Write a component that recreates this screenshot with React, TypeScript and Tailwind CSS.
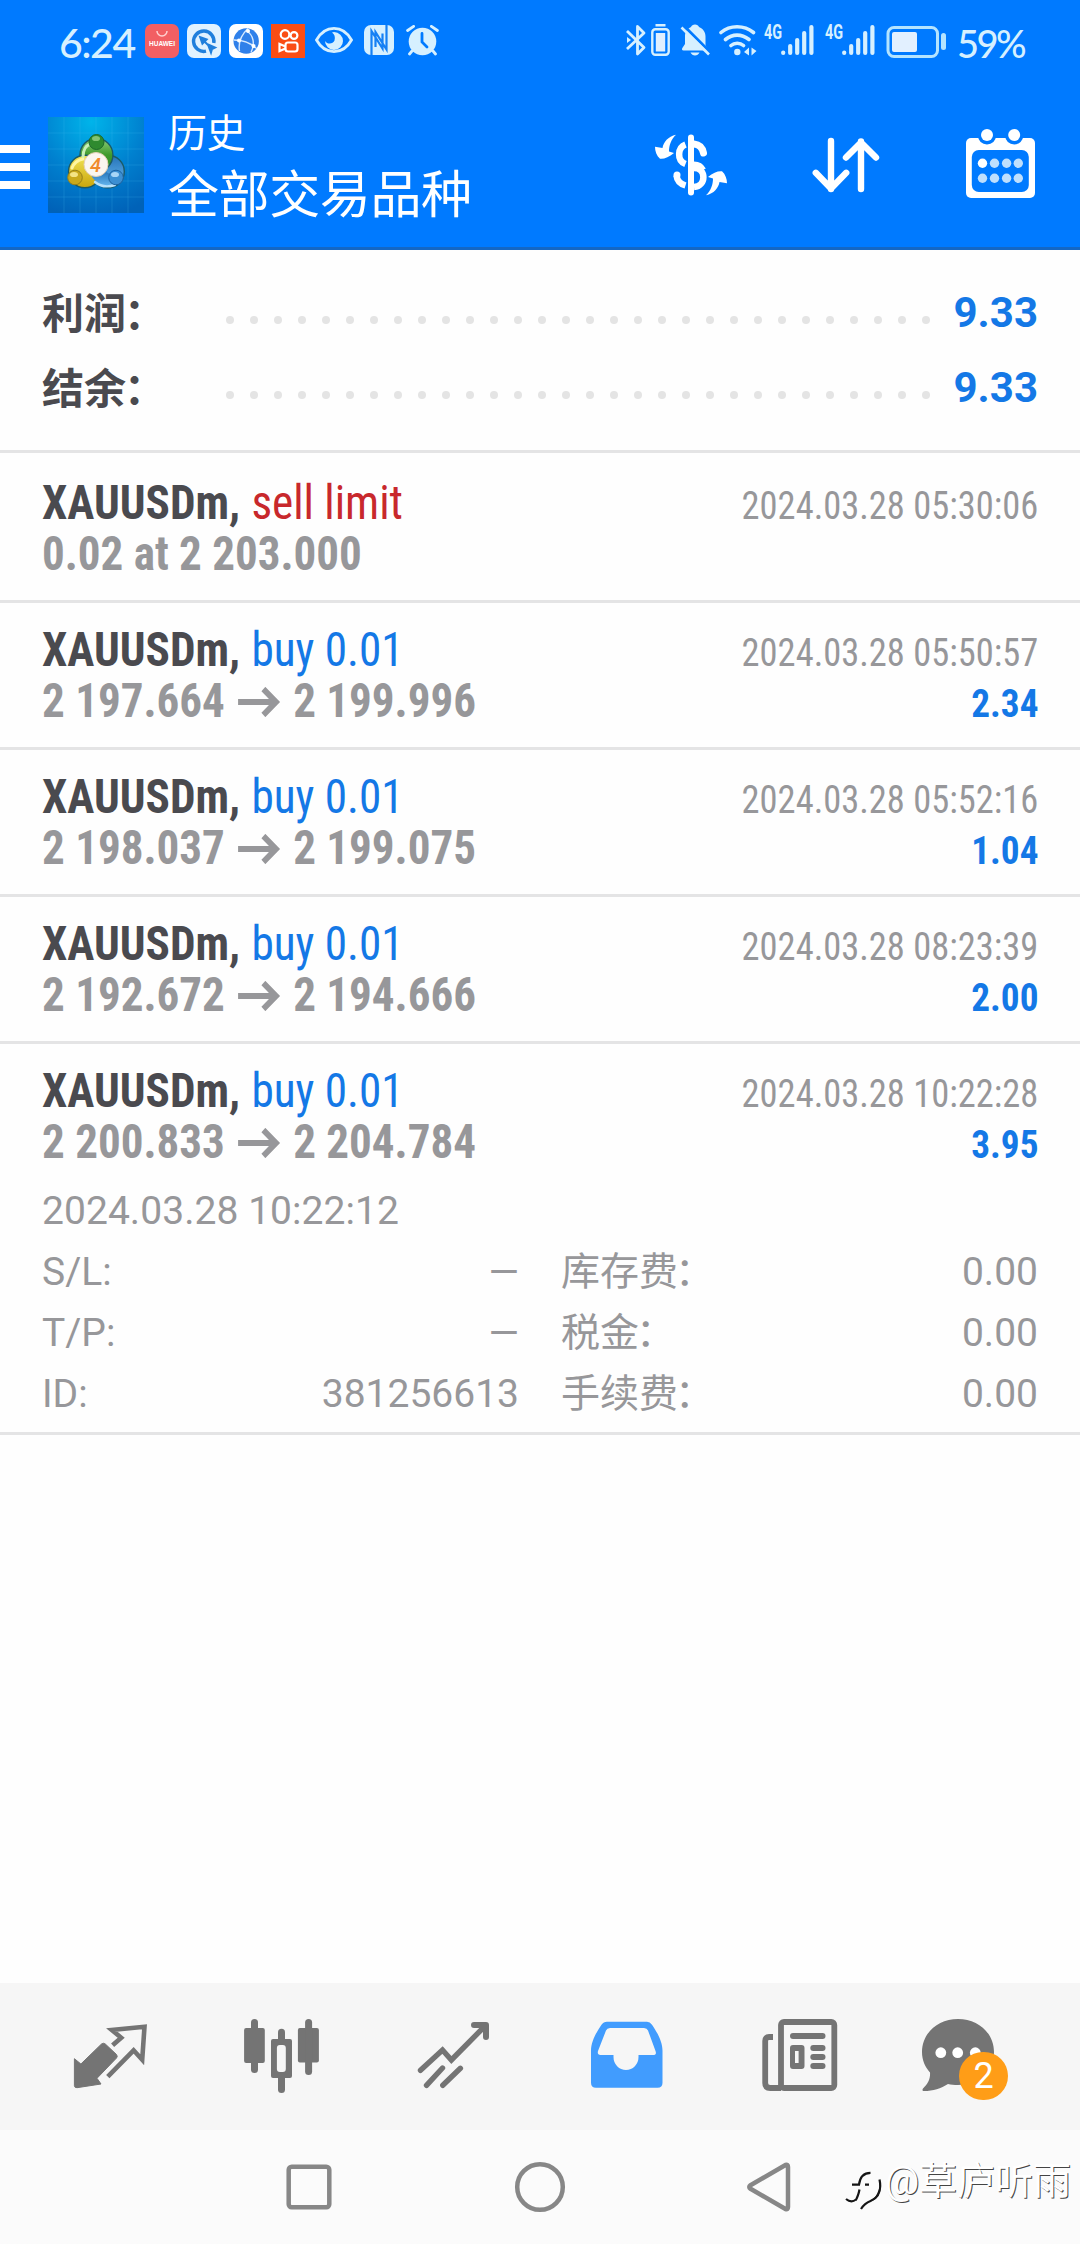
import React from "react";

type Deal = {
  symbol: string;
  side: string;
  sideColor: string;
  from: string;
  to?: string;
  time: string;
  profit?: string;
};

const deals: Deal[] = [
  { symbol: "XAUUSDm,", side: "sell limit", sideColor: "text-[#c8282c]", from: "0.02 at 2 203.000", time: "2024.03.28 05:30:06" },
  { symbol: "XAUUSDm,", side: "buy 0.01", sideColor: "text-[#1478e6]", from: "2 197.664", to: "2 199.996", time: "2024.03.28 05:50:57", profit: "2.34" },
  { symbol: "XAUUSDm,", side: "buy 0.01", sideColor: "text-[#1478e6]", from: "2 198.037", to: "2 199.075", time: "2024.03.28 05:52:16", profit: "1.04" },
  { symbol: "XAUUSDm,", side: "buy 0.01", sideColor: "text-[#1478e6]", from: "2 192.672", to: "2 194.666", time: "2024.03.28 08:23:39", profit: "2.00" },
  { symbol: "XAUUSDm,", side: "buy 0.01", sideColor: "text-[#1478e6]", from: "2 200.833", to: "2 204.784", time: "2024.03.28 10:22:28", profit: "3.95" },
];

const details = [
  ["S/L:", "—", "库存费", "0.00"],
  ["T/P:", "—", "税金", "0.00"],
  ["ID:", "381256613", "手续费", "0.00"],
];

const summary = [
  ["利润", "9.33"],
  ["结余", "9.33"],
];

function SignalBars() {
  return (
    <div className="flex items-start">
      <span className="-mt-[1px] w-[17px] origin-left scale-x-[0.72] font-['Roboto'] text-[20px] leading-[18px] font-bold">4G</span>
      <svg className="h-8 w-[33px]" viewBox="0 0 33 32" fill="none" stroke="currentColor" strokeWidth="4.2" strokeLinecap="round">
        <path d="M2.2 28.6v.4M9.2 22v7M16.2 16v13M23.2 9v20M30.4 3v26" />
      </svg>
    </div>
  );
}

function StatusBar() {
  return (
    <div className="flex h-[82px] items-start justify-between pt-6 pr-[56px] pl-[59px] text-[#d6f0ff]">
      <div className="flex h-[34px] items-start">
        <span className="mt-[2px] mr-[9px] w-[77px] font-['Lato'] text-[41px] leading-[34px] font-medium tracking-[-1.5px]">6:24</span>
        {/* HUAWEI store */}
        <div className="flex h-[34px] w-[34px] flex-col items-center rounded-[7px] bg-[#f25f63]">
          <svg className="mt-1.5 h-2 w-3" viewBox="0 0 12 8" fill="none" stroke="#ffd0cf" strokeWidth="1.5">
            <path d="M1 1a5 5 0 0 0 10 0" />
          </svg>
          <span className="mt-[2px] font-['Liberation_Sans'] text-[6.5px] leading-[8px] font-bold text-white">HUAWEI</span>
        </div>
        <svg className="ml-2 h-[34px] w-[34px]" viewBox="0 0 34 34" fill="none">
          <rect width="34" height="34" rx="7" fill="#e0f2ff" />
          <path d="M19 27.2A10.2 10.2 0 1 1 26.8 19" stroke="#1f7fdc" strokeWidth="3.4" />
          <path d="M11.5 11.5l10 3.5-6.5 6.5z" fill="#1f7fdc" />
          <path d="M16 16l5.5 5.5M21 20.5l7 3-3 1.5-1 3.5z" stroke="#1f7fdc" strokeWidth="2" fill="#1f7fdc" />
        </svg>
        <svg className="ml-2 h-[34px] w-[34px]" viewBox="0 0 34 34" fill="none">
          <rect width="34" height="34" rx="7" fill="#fff" />
          <circle cx="17.2" cy="17" r="12.7" fill="#2f80ea" />
          <path d="M5 16c8 0 17 3 23 9M19 4.500C12 11 9 18 10.500 27M17 6.500C25 11 26 20 22 28.500" stroke="#d5e8ff" strokeWidth="1.400" />
          <circle cx="19" cy="7" r="2" fill="#fff" />
          <circle cx="10" cy="16.500" r="2" fill="#fff" />
          <circle cx="24.500" cy="22" r="2" fill="#fff" />
        </svg>
        <svg className="ml-2 h-[34px] w-[34px]" viewBox="0 0 34 34" fill="none" stroke="#fff" strokeWidth="2.2">
          <rect width="34" height="34" fill="#fa4d14" stroke="none" />
          <circle cx="14" cy="10.500" r="4.300" />
          <circle cx="23" cy="11.500" r="3.400" />
          <rect x="14.500" y="18.500" width="12" height="9" rx="2.500" />
          <path d="M14.500 22.500l-6-2.500v7l6-2.500" />
        </svg>
        <svg className="ml-[10px] h-8 w-[38px]" viewBox="0 0 38 32" fill="none">
          <path d="M1.500 16C10 0.500 28 .500 36.500 16 28 31.500 10 31.500 1.500 16z" stroke="#d6f0ff" strokeWidth="2.800" />
          <path d="M19 8a9 9 0 1 1-9 9c2 3.500 8 3.500 9.500-.500C20.500 13 19.500 10 17 8.500z" fill="#d6f0ff" />
        </svg>
        <svg className="mt-[1px] ml-[11px] h-[30px] w-[30px]" viewBox="0 0 30 30" fill="none">
          <rect width="30" height="30" rx="7" fill="#d6f0ff" />
          <path d="M7.500 30V6l11 17.500V8.500M22.500 0v24.500L11.500 7v15" stroke="#1580f4" strokeWidth="2.200" />
        </svg>
        <svg className="mt-[1px] ml-3 h-[31px] w-[33px]" viewBox="0 0 33 31" fill="none" stroke="#d6f0ff" strokeWidth="2.800" strokeLinecap="round">
          <circle cx="16.500" cy="16.500" r="13.800" fill="#d6f0ff" stroke="none" />
          <path d="M1.600 5.500l6-4.200M31.400 5.500l-6-4.200M6 26l-2.500 3M27 26l2.500 3" />
          <path d="M16 8.500V17l5 5" stroke="#007aff" strokeWidth="2.800" />
        </svg>
      </div>

      <div className="flex items-start">
        <svg className="h-8 w-[21px]" viewBox="0 0 21 32" fill="none" stroke="currentColor" strokeWidth="2.800">
          <path d="M1 7l17 16.500-6.500 6.500V2.500L18 9 1 25" strokeLinejoin="round" />
          <path d="M1 13l4 3-4 3z" fill="currentColor" stroke="none" />
        </svg>
        <svg className="ml-1 h-8 w-[19px]" viewBox="0 0 19 32" fill="none">
          <path d="M4.500 1.200h10" stroke="currentColor" strokeWidth="2.600" />
          <rect x="1.300" y="5.300" width="16.400" height="25.400" rx="3" stroke="currentColor" strokeWidth="2.400" />
          <rect x="4.800" y="9" width="9.400" height="18.500" fill="#e0efff" />
        </svg>
        <svg className="ml-[10px] h-8 w-[31px]" viewBox="0 0 31 32">
          <path d="M15 0.500c2 0 3.500 1 4 2.500 4 1.500 6.500 5 6.500 9.500v9l3 5h-25c-1.500 0-2-1.500-1-2.800L5 20v-8c0-4.500 2.500-7.500 6-9C11.500 1.500 13 .500 15 .500z" fill="currentColor" />
          <path d="M10.500 28.500h9c-1 2-2.500 3-4.500 3s-3.500-1-4.500-3z" fill="currentColor" />
          <path d="M3 1l28 28" stroke="#007aff" strokeWidth="3" />
          <path d="M1.500 3.500l27.500 27" stroke="currentColor" strokeWidth="2.600" />
        </svg>
        <svg className="ml-2 h-8 w-[38px]" viewBox="0 0 38 32" fill="none" stroke="currentColor" strokeWidth="3.600" strokeLinecap="round">
          <path d="M2 8.500C11 .800 25 .800 34.500 8.500M6.500 15.500c7-5.800 16-5.800 23.500 0M12 21.500c3.500-3 9-3 12.500 0" />
          <circle cx="18.300" cy="28" r="3.200" fill="currentColor" stroke="none" />
          <path d="M30 23.500v8l-5-3.500zM32.500 23.500v8l5-4.500z" fill="currentColor" stroke="none" />
        </svg>
        <div className="ml-[7px]"><SignalBars /></div>
        <div className="ml-[11px]"><SignalBars /></div>
        <svg className="mt-[1px] ml-[11px] h-[34px] w-[62px]" viewBox="0 0 62 34" fill="none">
          <rect x="2" y="2.500" width="49.500" height="29" rx="6" stroke="#b4e4ff" strokeWidth="3" />
          <rect x="6" y="7" width="25" height="20" rx="2" fill="#e2f0ff" />
          <rect x="55" y="8" width="5" height="17" rx="2.500" fill="#b4e4ff" />
        </svg>
        <span className="mt-[2px] ml-[9px] w-[67px] font-['Lato'] text-[38px] leading-[34px] font-medium tracking-[-2.5px]">59%</span>
      </div>
    </div>
  );
}

function AppLogo() {
  return (
    <svg className="h-24 w-24" viewBox="0 0 96 96">
      <defs>
        <radialGradient id="sky" cx="0.45" cy="0.05" r="1">
          <stop offset="0" stopColor="#00b4ea" />
          <stop offset="0.55" stopColor="#0080cf" />
          <stop offset="1" stopColor="#0062b8" />
        </radialGradient>
        <linearGradient id="green" x2="0" y2="1">
          <stop offset="0" stopColor="#8fce7a" />
          <stop offset="0.5" stopColor="#3f9a2c" />
          <stop offset="1" stopColor="#2f8a28" />
        </linearGradient>
        <linearGradient id="gold" x2="0" y2="1">
          <stop offset="0" stopColor="#f2e455" />
          <stop offset="1" stopColor="#c9a50c" />
        </linearGradient>
        <linearGradient id="azure" x2="0" y2="1">
          <stop offset="0" stopColor="#2472b8" />
          <stop offset="1" stopColor="#6bbcf2" />
        </linearGradient>
      </defs>
      <rect width="96" height="96" fill="url(#sky)" />
      <path d="M16 0v96M32 0v96M48 0v96M64 0v96M80 0v96M0 16h96M0 32h96M0 48h96M0 64h96M0 80h96" stroke="#4cc0f5" strokeOpacity="0.2" />
      <g stroke="#1b5a66" strokeWidth="1.4">
        <circle cx="60" cy="54.500" r="16.300" fill="url(#azure)" />
        <circle cx="48.400" cy="38" r="16.500" fill="url(#green)" />
        <circle cx="36.800" cy="54.500" r="16.300" fill="url(#gold)" />
      </g>
      {/* the blue figure's arm passes over the gold one */}
      <path d="M43 58c4 8 12 13 22 12l3-10-12-6z" fill="url(#azure)" />
      <path d="M35 40c0-7 3-12 8-13" fill="none" stroke="#c9efb8" strokeWidth="3" strokeLinecap="round" />
      <path d="M47 65c6 5 14 5 20 3" fill="none" stroke="#b7e1fb" strokeWidth="2.400" strokeLinecap="round" />
      <path d="M24 51c2-5 6-8 11-9" fill="none" stroke="#fff6a0" strokeWidth="3" strokeLinecap="round" />
      <circle cx="48.500" cy="25" r="7.500" fill="#2f8a2f" stroke="#1e6a2a" />
      <ellipse cx="48" cy="21.500" rx="4" ry="2.600" fill="#a5dc8f" fillOpacity="0.7" />
      <circle cx="27" cy="60.500" r="7.300" fill="#c9a91c" stroke="#96801a" />
      <ellipse cx="26" cy="57.500" rx="4" ry="2.600" fill="#fff3a0" fillOpacity="0.8" />
      <circle cx="68" cy="60.500" r="7.300" fill="#3c8fd2" stroke="#1e62a0" />
      <ellipse cx="67" cy="57.500" rx="4" ry="2.600" fill="#c4e6ff" fillOpacity="0.8" />
      <circle cx="48" cy="47.500" r="12" fill="#fbf6ef" stroke="#e4cfb4" />
      <text x="47.500" y="54.500" textAnchor="middle" fontFamily="Roboto" fontStyle="italic" fontWeight="500" fontSize="20" fill="#f08a2b">4</text>
    </svg>
  );
}

function Header() {
  return (
    <header className="h-[250px] border-b-[3px] border-[#1467c4] bg-[#007aff]">
      <StatusBar />
      <div className="flex items-start">
        <div className="mt-[63px] flex w-[30px] flex-col gap-[10px]">
          <div className="h-2 bg-white" />
          <div className="h-2 bg-white" />
          <div className="h-2 bg-white" />
        </div>
        <div className="mt-[35px] ml-[18px]">
          <AppLogo />
        </div>
        <div className="mt-[27px] ml-6 flex flex-1 flex-col text-white">
          <span className="text-[39px] leading-[50px] tracking-[-0.4px]">历史</span>
          <span className="mt-[5px] text-[51px] leading-[64px] tracking-[-0.4px]">全部交易品种</span>
        </div>
        <div className="mt-[42px] mr-[39px] flex gap-[75px] text-white">
          <svg className="h-20 w-20" viewBox="0 0 80 80" fill="none" stroke="currentColor">
            <path d="M40 13.500v55" strokeWidth="6" strokeLinecap="round" />
            <path d="M34.500 20.500c-8 3-9 16 0 19.500M43 44c12.500 0 12.500 18 0 19" strokeWidth="6.500" />
            <path d="M43 20c5 .500 8.500 4 9.500 9" strokeWidth="7" strokeLinecap="round" />
            <path d="M43 39.500c4 0 8 2 10 6" strokeWidth="4" />
            <path d="M25.500 51.500c.500 5 4 8.500 9 10" strokeWidth="6.500" />
            <circle cx="26" cy="51" r="3.500" fill="currentColor" stroke="none" />
            <path d="M25 10.700C17 12.500 12.500 18 11.500 24L4 22.700c0 4 1.500 9 5 12 4 .500 9-1.500 14-5.700L18 27.500c0-6 2-12 7-16.800z" fill="currentColor" stroke="none" />
            <path d="M55 71.300C63 69.500 67.500 64 68.500 58l7.500 1.300c0-4-1.500-9-5-12-4-.500-9 1.500-14 5.700l5 1.500c0 6-2 12-7 16.800z" fill="currentColor" stroke="none" />
          </svg>
          <svg className="h-20 w-20" viewBox="0 0 80 80" fill="none" stroke="currentColor" strokeWidth="6.400" strokeLinecap="round" strokeLinejoin="round">
            <path d="M25 17v48M9.800 48.800L25 64.500l15.200-15.700M55 65V17.500M40 33.500l15-15 15 15" />
          </svg>
          <svg className="h-20 w-20" viewBox="0 0 80 80">
            <rect x="5" y="14" width="69" height="60" rx="5" fill="currentColor" />
            <rect x="10.800" y="26" width="57" height="42" rx="7" fill="#007aff" />
            <path d="M17 12a9 8.500 0 0 0 18 0zM44.200 12a9 8.500 0 0 0 18 0z" fill="#007aff" />
            <circle cx="26" cy="11" r="6" fill="currentColor" />
            <circle cx="53.200" cy="11" r="6" fill="currentColor" />
            <circle cx="21.500" cy="39.300" r="4.700" fill="currentColor" />
            <g fill="#bfdffd">
              <circle cx="33.500" cy="39.300" r="4.700" />
              <circle cx="45.600" cy="39.300" r="4.700" />
              <circle cx="57.300" cy="39.300" r="4.700" />
              <circle cx="21.500" cy="54.300" r="4.700" />
              <circle cx="33.500" cy="54.300" r="4.700" />
              <circle cx="45.600" cy="54.300" r="4.700" />
              <circle cx="57.300" cy="54.300" r="4.700" />
            </g>
          </svg>
        </div>
      </div>
    </header>
  );
}

function DealRow({ deal, children }: { deal: Deal; children?: React.ReactNode }) {
  return (
    <div className="border-b-[3px] border-[#e4e4e5] px-[42px] pt-[21px] pb-[21px]">
      <div className="font-['Roboto_Condensed','Roboto'] [font-stretch:75%]">
        <div className="flex h-[51px] items-baseline justify-between leading-[51px]">
          <div className="flex origin-left scale-x-[0.942] gap-[12px] text-[48px] whitespace-nowrap">
            <span className="font-bold text-[#4a4a4f]">{deal.symbol}</span>
            <span className={deal.sideColor}>{deal.side}</span>
          </div>
          <span className="origin-right scale-x-[0.935] text-[39px] text-[#97979a]">{deal.time}</span>
        </div>
        <div className="flex h-[51px] items-baseline justify-between leading-[51px] font-bold">
          <div className="flex origin-left scale-x-[0.938] items-baseline text-[48px] whitespace-nowrap text-[#97979a]">
            <span>{deal.from}</span>
            {deal.to && (
              <>
                <svg className="mx-[14px] h-[30px] w-[45px]" viewBox="0 0 45 30" fill="none" stroke="currentColor" strokeWidth="6">
                  <path d="M0 15h40M27 2l13.500 13L27 28" />
                </svg>
                <span>{deal.to}</span>
              </>
            )}
          </div>
          <span className="origin-right scale-x-[0.955] text-[39px] text-[#1478e6]">{deal.profit}</span>
        </div>
      </div>
      {children}
    </div>
  );
}

const tabs = [
  {
    id: "quotes",
    place: "ml-[70px]",
    icon: (
      <>
        <path d="M4.400 42.700L10.900 48 31.500 28q2-1.500 3.800 0L46.500 38.500q1.500 2 0 3.500L27 62.300l4 5.700L7 71.700q-2.600 0-2.600-2z" fill="currentColor" />
        <path d="M42.600 29.300l8.600-7.600L41.800 14l32.700-3.300-2.300 33.100-8.600-9.500-25.800 26.400" strokeWidth="4.600" />
      </>
    ),
  },
  {
    id: "chart",
    place: "ml-[91px]",
    icon: (
      <g fill="currentColor" stroke="none">
        <rect x="3.100" y="12" width="20.700" height="35" rx="2" />
        <rect x="10" y="3" width="7" height="54" rx="3.500" />
        <rect x="56.900" y="12" width="21" height="34.500" rx="2" />
        <rect x="64.100" y="3" width="7" height="56" rx="3.500" />
        <rect x="30" y="23" width="21" height="39" rx="2" />
        <rect x="37" y="12.700" width="7" height="64.300" rx="3.500" />
        <rect x="35.900" y="29" width="8.900" height="27" rx="3" fill="#f6f6f6" />
      </g>
    ),
  },
  {
    id: "trade",
    place: "ml-[92px]",
    icon: (
      <g strokeWidth="5.400" strokeLinecap="round">
        <path d="M7.500 54.300L29.500 34l8.900 10L72 10M29.500 52L13.500 69.300M47.400 52.300L29.800 69.300" />
        <path d="M61 9h12v12" strokeWidth="6" strokeLinejoin="round" />
      </g>
    ),
  },
  {
    id: "history",
    place: "ml-[94px]",
    icon: (
      <path
        fillRule="evenodd"
        fill="#419cfe"
        stroke="none"
        d="M20 5.700h40q3 0 5 3c4 6 10.500 16 10.500 26v32q0 5-5 5H9q-5 0-5-5v-32C4 24.700 10.500 14.700 14.500 8.700q2-3 5.500-3zM23 12q-3 0-4 2.500L11 35q-1 4 2.500 4H26.500v2a12.500 13 0 0 0 25 0v-2H66q4 0 2.500-4L61 14.500q-1-2.500-4-2.500z"
      />
    ),
  },
  {
    id: "news",
    place: "ml-[93px]",
    icon: (
      <>
        <rect x="21" y="6" width="53.300" height="66" rx="3" strokeWidth="5.800" />
        <path d="M13 21H9q-3.800 0-3.800 4v42q0 5 5 5H21" strokeWidth="5.800" />
        <g fill="currentColor" stroke="none">
          <rect x="30" y="17" width="35.500" height="6" rx="3" />
          <path fillRule="evenodd" d="M33 29h8.500q3 0 3 3v18q0 3-3 3H33q-3 0-3-3V32q0-3 3-3zM35 35v12h3.600V35z" />
          <rect x="50.300" y="29" width="15.200" height="6" rx="3" />
          <rect x="50.300" y="38" width="15.200" height="6" rx="3" />
          <rect x="50.300" y="47" width="15.200" height="6" rx="3" />
        </g>
      </>
    ),
  },
  {
    id: "messages",
    place: "ml-[80px]",
    icon: (
      <g stroke="none">
        <path d="M38 3C18 3 2 17 2 36c0 8 3 15 8 20.500C10.500 63 8 68 3 72.500c-1 1.500-.500 2.500 1 2.500 9 0 17-2.500 24-7 3 .800 6 1 10 1 20 0 36-14 36-33S58 3 38 3z" fill="currentColor" />
        <g fill="#fff">
          <circle cx="20.800" cy="36.700" r="5.400" />
          <circle cx="37.700" cy="36.700" r="5.400" />
          <circle cx="55.300" cy="36.700" r="5.400" />
        </g>
      </g>
    ),
  },
];

function TabBar() {
  return (
    <nav className="flex h-[147px] items-start bg-[#f6f6f6] pt-[33px] text-[#747474]">
      {tabs.map((tab) => (
        <div key={tab.id} className={`relative h-20 w-20 ${tab.place}`}>
          <svg className="h-20 w-20" viewBox="0 0 80 80" fill="none" stroke="currentColor">
            {tab.icon}
          </svg>
          {tab.id === "messages" && (
            <span className="absolute top-9 left-[39px] flex h-12 w-[49px] items-center justify-center rounded-full bg-[#ff9d17] font-['Roboto'] text-[36px] leading-none text-white">
              2
            </span>
          )}
        </div>
      ))}
    </nav>
  );
}

function SystemNav() {
  return (
    <div className="relative flex h-[114px] items-center bg-[#fbfbfb] pl-[286px] text-[#878787]">
      <svg className="h-[46px] w-[46px]" viewBox="0 0 46 46" fill="none" stroke="currentColor" strokeWidth="4.500">
        <rect x="2.700" y="2.700" width="40.600" height="40.600" rx="3" />
      </svg>
      <svg className="ml-[182px] h-[52px] w-[52px]" viewBox="0 0 52 52" fill="none" stroke="currentColor" strokeWidth="4.500">
        <circle cx="26" cy="26" r="22.800" />
      </svg>
      <svg className="ml-[180px] h-[52px] w-[46px]" viewBox="0 0 46 52" fill="none" stroke="currentColor" strokeWidth="4.500" strokeLinejoin="round">
        <path d="M4.500 24.200Q2 26 4.500 27.800L39.500 48q2.500.800 2.500-2V6q0-2.800-2.500-2z" />
      </svg>
      {/* author mark over the corner */}
      <div className="absolute top-[22px] right-[9px] flex items-center text-white">
        <svg className="mt-[16px] h-[42px] w-[38px]" viewBox="0 0 38 42" fill="none">
          <path d="M1 31c3 2.500 7 3 10 .500M7 16.700h7C15 8.500 19 4.800 25.500 4.800M14.500 21.500c-1 5-2 8-4 11M20 16.700h4M34.500 11.500c2.500 12-1 18-9 21.500-4 1.500-7 4-9.500 8" stroke="#151515" strokeWidth="2.200" />
          <path d="M35 14c2 12-3 19-12.500 20 6-2 11.500-7 12.500-20z" fill="#151515" />
        </svg>
        <span className="ml-[2px] text-[38px] leading-[54px] whitespace-nowrap [text-shadow:1px_1px_0_#444]">@草庐听雨</span>
      </div>
    </div>
  );
}

export default function App() {
  return (
    <div className="flex h-[2244px] w-[1080px] flex-col overflow-hidden bg-[#fefefe] font-['Roboto','Noto_Sans_CJK_SC',sans-serif]">
      <Header />

      <section className="h-[203px] border-b-[3px] border-[#e4e4e5] px-[42px] pt-[25px]">
        {summary.map(([label, value]) => (
          <div key={label} className="flex h-[75px] items-center font-bold">
            <span className="mt-[4px] w-[184px] text-[42px] leading-[75px] text-[#4a4a4f]">
              {label}
              <span className="-ml-[2px]">：</span>
            </span>
            <div className="mt-[15px] flex w-[704px] justify-between">
              {Array.from({ length: 30 }, (_, i) => (
                <span key={i} className="h-2 w-2 rounded-full bg-[#e4e4e4]" />
              ))}
            </div>
            <span className="ml-auto text-[42px] leading-[75px] text-[#1478e6]">{value}</span>
          </div>
        ))}
      </section>

      <main className="flex-1">
        {deals.map((deal, i) => (
          <div key={deal.time} className={i === 0 ? "pt-[3px]" : ""}>
            <DealRow deal={deal}>
              {i === deals.length - 1 && (
                <div className="-mb-[14px] pt-[14px] text-[39px] leading-[61px] text-[#97979a]">
                  <div className="tracking-[0.05px]">2024.03.28 10:22:12</div>
                  {details.map(([leftLabel, leftValue, rightLabel, rightValue]) => (
                    <div key={leftLabel} className="grid h-[61px] grid-cols-2 gap-[42px]">
                      <div className="flex justify-between">
                        <span>{leftLabel}</span>
                        <span>{leftValue}</span>
                      </div>
                      <div className="flex justify-between">
                        <span>
                          {rightLabel}
                          <span className="-ml-[3px]">：</span>
                        </span>
                        <span>{rightValue}</span>
                      </div>
                    </div>
                  ))}
                </div>
              )}
            </DealRow>
          </div>
        ))}
      </main>

      <TabBar />
      <SystemNav />
    </div>
  );
}
